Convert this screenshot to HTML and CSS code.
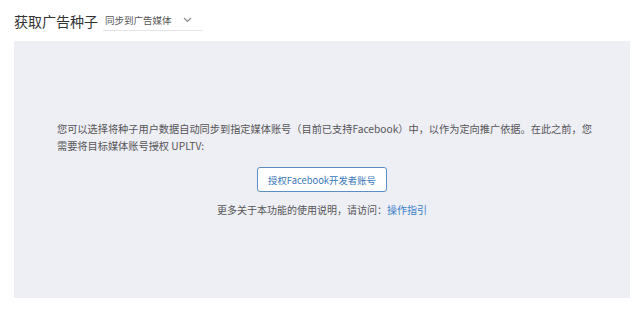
FILE: index.html
```html
<!DOCTYPE html>
<html lang="zh">
<head>
<meta charset="utf-8">
<title>获取广告种子</title>
<link rel="stylesheet" href="styles.css">
</head>
<body>
  <div class="header">
    <h1 class="title">获取广告种子</h1>
    <div class="select">
      <span>同步到广告媒体</span>
      <svg class="chevron" width="9" height="6" viewBox="0 0 9 6"><path d="M1 1 L4.5 4.5 L8 1" fill="none" stroke="#888" stroke-width="1.1"/></svg>
    </div>
  </div>

  <div class="panel">
    <div class="content">
      <p class="intro">您可以选择将种子用户数据自动同步到指定媒体账号（目前已支持Facebook）中，以作为定向推广依据。在此之前，您需要将目标媒体账号授权 UPLTV:</p>
      <div class="actions">
        <button class="authBtn" type="button">授权Facebook开发者账号</button>
        <p class="more">更多关于本功能的使用说明，请访问：<a href="#">操作指引</a></p>
      </div>
    </div>
  </div>
</body>
</html>
```
FILE: styles.css
```css
body {
    margin: 0;
    background: #fff;
    font-family: "Noto Sans CJK SC", "Noto Sans", sans-serif;
    color: #333;
}

.header {
    display: flex;
    align-items: center;
    height: 41px;
    padding: 0 14px;
    box-sizing: border-box;
}

.title {
    margin: 0;
    font-size: 14px;
    font-weight: normal;
    color: #333;
}

.select {
    display: flex;
    align-items: center;
    justify-content: space-between;
    width: 95px;
    margin-left: 5px;
    margin-top: 2px;
    padding: 0 2px 3px 2px;
    border-bottom: 1px solid #e4e4e4;
    font-size: 9.5px;
    color: #555;
}

.chevron {
    margin-right: 8px;
}

.panel {
    margin: 0 10px 17px 14px;
    height: 257px;
    background: #eeeef5;
    display: flex;
    align-items: center;
}

.content {
    width: 100%;
    margin-top: -2px;
}

.intro {
    margin: 0;
    padding: 0 33px 0 43px;
    font-size: 10.2px;
    line-height: 17px;
    color: #555;
}

.actions {
    display: flex;
    flex-direction: column;
    align-items: center;
}

.authBtn {
    margin-top: 13px;
    width: 130px;
    height: 25px;
    background: #fff;
    border: 1px solid #5b8ec4;
    border-radius: 3px;
    font-family: inherit;
    font-size: 9.4px;
    color: #3a78b8;
    padding: 0;
}

.more {
    margin: 10px 0 0 0;
    font-size: 10px;
    color: #555;
}

.more a {
    color: #3a7fc8;
    text-decoration: none;
}
```
